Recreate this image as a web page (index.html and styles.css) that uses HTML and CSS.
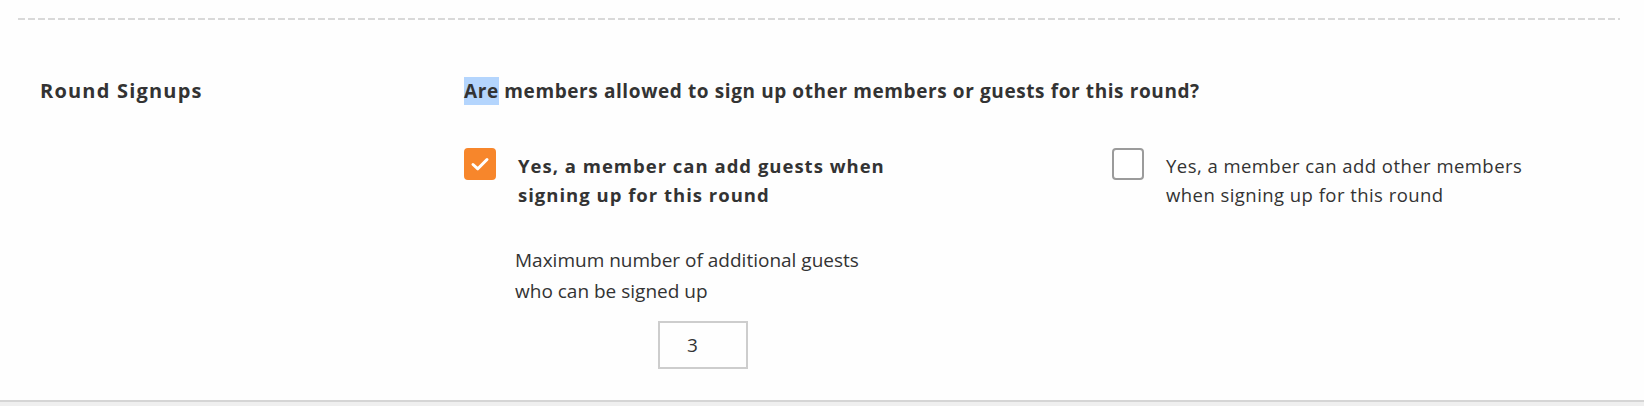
FILE: index.html
```html
<!DOCTYPE html>
<html lang="en">
<head>
<meta charset="utf-8">
<title>Round Signups</title>
<link rel="stylesheet" href="styles.css">
</head>
<body>
<div class="page">
  <div class="divider"></div>
  <section class="row">
    <h3 class="title">Round Signups</h3>
    <div class="content">
      <p class="question"><span class="sel">Are</span> members allowed to sign up other members or guests for this round?</p>
      <div class="options">
        <div class="option option-guests">
          <div class="opt-head">
            <span class="box checked">
              <svg width="20" height="16" viewBox="0 0 20 16"><path d="M3 8.5 L7.8 12.8 L17 3.5" fill="none" stroke="#fff" stroke-width="3" stroke-linecap="round" stroke-linejoin="round"/></svg>
            </span>
            <span class="label label-bold">Yes, a member can add guests when<br>signing up for this round</span>
          </div>
          <div class="sub">
            <p class="sub-label">Maximum number of additional guests<br>who can be signed up</p>
            <div class="num">3</div>
          </div>
        </div>
        <div class="option option-members">
          <div class="opt-head">
            <span class="box"></span>
            <span class="label">Yes, a member can add other members<br>when signing up for this round</span>
          </div>
        </div>
      </div>
    </div>
  </section>
  <div class="footer-line"></div>
</div>
</body>
</html>
```
FILE: styles.css
```css
html, body {
  margin: 0;
  padding: 0;
  background: #fefefe;
}
body {
  font-family: "Open Sans", "Liberation Sans", sans-serif;
  color: #333;
  width: 1644px;
  height: 406px;
  overflow: hidden;
}
.page {
  display: flex;
  flex-direction: column;
  height: 406px;
}
.divider {
  margin: 18px 24px 0 18px;
  height: 2px;
  background: repeating-linear-gradient(to right, #d9d9d9 0 7px, transparent 7px 10px);
}
.row {
  flex: 1;
  display: grid;
  grid-template-columns: 424px 1fr;
  padding: 56px 0 0 40px;
}
.title {
  margin: 0;
  font-size: 20px;
  letter-spacing: 1.2px;
  font-weight: 700;
  line-height: 30px;
}
.question {
  margin: 0;
  font-size: 19px;
  letter-spacing: 0.6px;
  font-weight: 700;
  line-height: 30px;
}
.sel {
  background: #b4d5fd;
  padding: 1px 0;
}
.options {
  display: flex;
  margin-top: 42px;
}
.option-guests {
  width: 648px;
}
.opt-head {
  display: flex;
  align-items: flex-start;
}
.box {
  flex: none;
  width: 32px;
  height: 32px;
  box-sizing: border-box;
  border: 2px solid #9b9b9b;
  border-radius: 4px;
  background: #fff;
  display: flex;
  align-items: center;
  justify-content: center;
}
.box.checked {
  background: #f7862b;
  border-color: #f7862b;
}
.label {
  margin: 3px 0 0 22px;
  font-size: 18.5px;
  letter-spacing: 0.45px;
  line-height: 29px;
}
.label-bold {
  font-weight: 700;
  letter-spacing: 1px;
}
.sub {
  margin: 36px 0 0 51px;
}
.sub-label {
  margin: 0;
  font-size: 19px;
  line-height: 31px;
}
.num {
  margin: 14px 0 0 143px;
  width: 90px;
  height: 48px;
  box-sizing: border-box;
  border: 2px solid #cdcdcd;
  padding-left: 27px;
  font-size: 19px;
  line-height: 44px;
}
.footer-line {
  height: 4px;
  border-top: 2px solid #d5d5d5;
  background: #efefef;
}
```
